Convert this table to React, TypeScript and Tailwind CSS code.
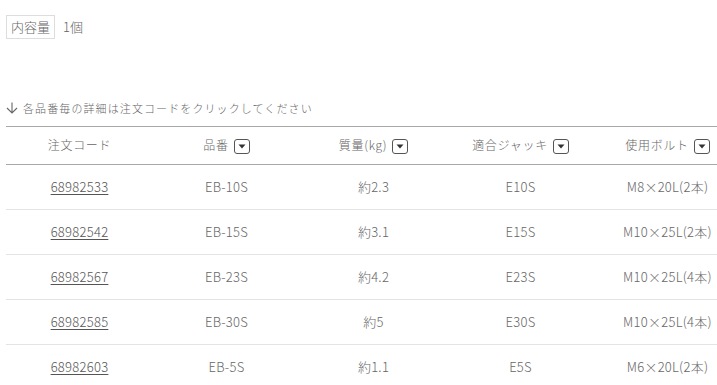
import React from 'react';

const rows = [
  { code: '68982533', part: 'EB-10S', weight: '約2.3', jack: 'E10S', bolt: 'M8×20L(2本)' },
  { code: '68982542', part: 'EB-15S', weight: '約3.1', jack: 'E15S', bolt: 'M10×25L(2本)' },
  { code: '68982567', part: 'EB-23S', weight: '約4.2', jack: 'E23S', bolt: 'M10×25L(4本)' },
  { code: '68982585', part: 'EB-30S', weight: '約5', jack: 'E30S', bolt: 'M10×25L(4本)' },
  { code: '68982603', part: 'EB-5S', weight: '約1.1', jack: 'E5S', bolt: 'M6×20L(2本)' },
];

function Caret() {
  return (
    <span className="inline-flex items-center justify-center w-[16px] h-[15px] border border-[#555] rounded-[3px] ml-[5px] align-middle">
      <svg width="8" height="5" viewBox="0 0 8 5">
        <path d="M0.5 0.5 L7.5 0.5 L4 4.5 Z" fill="#333" />
      </svg>
    </span>
  );
}

export default function App() {
  const headers: { label: string; sort: boolean }[] = [
    { label: '注文コード', sort: false },
    { label: '品番', sort: true },
    { label: '質量(kg)', sort: true },
    { label: '適合ジャッキ', sort: true },
    { label: '使用ボルト', sort: true },
  ];

  return (
    <div
      className="w-[717px] h-[385px] overflow-hidden bg-white text-[#666] pl-[6px] pt-[15px] font-light"
      style={{ fontFamily: '"Noto Sans CJK JP", "Noto Sans", sans-serif' }}
    >
      {/* spec row */}
      <div className="flex items-center gap-[8px] text-[13px]">
        <span className="border border-[#ddd] px-[4px] h-[24px] leading-[22px]">内容量</span>
        <span>1個</span>
      </div>

      {/* hint */}
      <div className="mt-[61px] flex items-center text-[11px] tracking-[0.1em] text-[#666]">
        <svg width="12" height="12" viewBox="0 0 12 12" className="mr-[5px]">
          <path d="M6 0.5 V11 M1 6 L6 11 L11 6" stroke="#666" strokeWidth="1.1" fill="none" />
        </svg>
        各品番毎の詳細は注文コードをクリックしてください
      </div>

      {/* table */}
      <table className="mt-[9px] w-[735px] table-fixed border-collapse text-[13px] tracking-[0.02em]">
        <thead>
          <tr className="h-[38px] border-t border-b border-[#a8a8a8]">
            {headers.map((h) => (
              <th key={h.label} className="font-light text-[12px] text-center text-[#666] tracking-[0.06em]">
                {h.label}
                {h.sort && <Caret />}
              </th>
            ))}
          </tr>
        </thead>
        <tbody>
          {rows.map((r) => (
            <tr key={r.code} className="h-[45px] border-b border-[#e3e3e3]">
              <td className="text-center">
                <a href="#" className="underline text-[#555] underline-offset-2">{r.code}</a>
              </td>
              <td className="text-center">{r.part}</td>
              <td className="text-center">{r.weight}</td>
              <td className="text-center">{r.jack}</td>
              <td className="text-center">{r.bolt}</td>
            </tr>
          ))}
        </tbody>
      </table>
    </div>
  );
}
